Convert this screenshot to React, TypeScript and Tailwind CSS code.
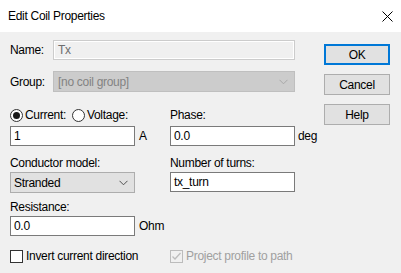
import React from "react";

const Chevron = ({ color }: { color: string }) => (
  <svg width="9" height="6" viewBox="0 0 9 6" fill="none">
    <path d="M0.5 0.8 L4.5 4.8 L8.5 0.8" stroke={color} strokeWidth="1" />
  </svg>
);

export default function App() {
  return (
    <div
      className="w-[401px] h-[273px] bg-[#f0f0f0] text-[12px] leading-[14px] tracking-[-0.3px] text-black overflow-hidden"
      style={{ fontFamily: '"Liberation Sans", Arial, sans-serif' }}
    >
      {/* title bar */}
      <div className="h-[32px] bg-white flex items-center justify-between pl-[8px] pr-[7px]">
        <span className="text-[12px]">Edit Coil Properties</span>
        <svg width="11" height="11" viewBox="0 0 11 11" className="mr-[1px]">
          <path d="M0.5 0.5 L10.5 10.5 M10.5 0.5 L0.5 10.5" stroke="#000" strokeWidth="1" />
        </svg>
      </div>

      <div className="flex">
        {/* left */}
        <div className="pl-[10px] w-[324px]">
          {/* Name */}
          <div className="mt-[8px] h-[20px] flex items-center">
            <span className="w-[43px]">Name:</span>
            <div className="w-[242px] h-[20px] border border-[#cccccc] bg-[#f0f0f0] flex items-center">
              <div className="w-full h-full border border-white flex items-center pl-[3px] text-[#6d6d6d]">Tx</div>
            </div>
          </div>
          {/* Group */}
          <div className="mt-[11px] h-[21px] flex items-center">
            <span className="w-[43px]">Group:</span>
            <div className="w-[242px] h-[21px] border border-[#bfbfbf] bg-[#cccccc] flex items-center justify-between pl-[4px] pr-[6px] text-[#838383]">
              <span>[no coil group]</span>
              <Chevron color="#a8a8a8" />
            </div>
          </div>

          {/* radios + phase */}
          <div className="mt-[16px] h-[14px] flex items-center">
            <div className="w-[160px] flex items-center">
              <span className="w-[13px] h-[13px] rounded-full border border-[#333] flex items-center justify-center bg-white">
                <span className="w-[7px] h-[7px] rounded-full bg-[#1a1a1a]" />
              </span>
              <span className="ml-[2px]">Current:</span>
              <span className="ml-[6px] w-[13px] h-[13px] rounded-full border border-[#333] bg-white" />
              <span className="ml-[2px]">Voltage:</span>
            </div>
            <span>Phase:</span>
          </div>
          <div className="mt-[4px] h-[20px] flex items-center">
            <div className="w-[125px] h-[20px] border border-[#7a7a7a] bg-white pl-[3px] flex items-center">1</div>
            <span className="w-[35px] pl-[4px]">A</span>
            <div className="w-[125px] h-[20px] border border-[#7a7a7a] bg-white pl-[3px] flex items-center">0.0</div>
            <span className="pl-[3px]">deg</span>
          </div>

          {/* conductor / turns */}
          <div className="mt-[10px] h-[14px] flex items-center">
            <span className="w-[160px]">Conductor model:</span>
            <span>Number of turns:</span>
          </div>
          <div className="mt-[2px] h-[21px] flex items-start">
            <div className="w-[125px] h-[21px] border border-[#adadad] bg-[#e1e1e1] flex items-center justify-between pl-[3px] pr-[6px]">
              <span>Stranded</span>
              <Chevron color="#505050" />
            </div>
            <span className="w-[35px]" />
            <div className="w-[125px] h-[20px] border border-[#7a7a7a] bg-white pl-[3px] flex items-center">tx_turn</div>
          </div>

          {/* resistance */}
          <div className="mt-[7px] h-[14px] flex items-center">Resistance:</div>
          <div className="mt-[2px] h-[20px] flex items-center">
            <div className="w-[125px] h-[20px] border border-[#7a7a7a] bg-white pl-[3px] flex items-center">0.0</div>
            <span className="pl-[4px]">Ohm</span>
          </div>

          {/* checkboxes */}
          <div className="mt-[13px] h-[14px] flex items-center">
            <div className="w-[160px] flex items-center">
              <span className="w-[13px] h-[13px] border border-[#333] bg-white" />
              <span className="ml-[3px]">Invert current direction</span>
            </div>
            <span className="w-[13px] h-[13px] border border-[#bcbcbc] bg-[#f0f0f0] flex items-center justify-center">
              <svg width="11" height="11" viewBox="0 0 11 11" fill="none">
                <path d="M1.5 5.5 L4 8 L9.5 2" stroke="#bcbcbc" strokeWidth="1.3" />
              </svg>
            </span>
            <span className="ml-[3px] text-[#a0a0a0]">Project profile to path</span>
          </div>
        </div>

        {/* buttons */}
        <div className="mt-[12px] flex flex-col gap-[9px] w-[66px]">
          <div className="h-[21px] border-2 border-[#0078d7] bg-[#e1e1e1] flex items-center justify-center">OK</div>
          <div className="h-[21px] border border-[#adadad] bg-[#e1e1e1] flex items-center justify-center">Cancel</div>
          <div className="h-[21px] border border-[#adadad] bg-[#e1e1e1] flex items-center justify-center">Help</div>
        </div>
      </div>
    </div>
  );
}
